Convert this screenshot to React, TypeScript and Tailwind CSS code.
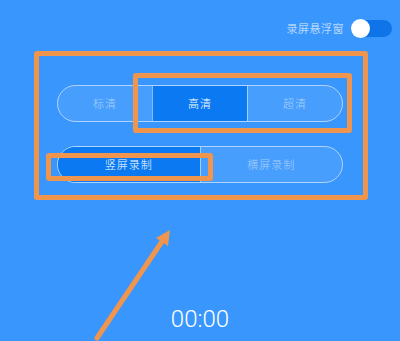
import React from 'react';

const Segmented = ({ items, active }: { items: string[]; active: number }) => (
  <div className="flex h-[37px] rounded-full border border-white/60 overflow-hidden">
    {items.map((label, i) => (
      <div
        key={label}
        className={`flex-1 flex items-center justify-center text-[11px] font-light tracking-[1px] ${
          i > 0 ? 'border-l border-white/50' : ''
        } ${i === active ? 'bg-[#0b7af2] text-white' : 'bg-white/[0.08] text-white/50'}`}
      >
        {label}
      </div>
    ))}
  </div>
);

export default function App() {
  return (
    <div
      className="relative w-[400px] h-[341px] overflow-hidden bg-[#3996fc]"
      style={{ fontFamily: '"Noto Sans CJK SC", "Noto Sans", sans-serif' }}
    >
      <div className="flex items-center justify-end gap-[7px] pt-[20px] pr-[8px]">
        <span className="text-[11px] leading-none font-light text-white/85 tracking-[0.5px]">录屏悬浮窗</span>
        <div className="relative w-[41px] h-[17px] rounded-full bg-[#0e74e8]">
          <div className="absolute left-0 top-[-1px] w-[19px] h-[19px] rounded-full bg-white" />
        </div>
      </div>

      <div className="mx-[57px] mt-[48px] flex flex-col gap-[24px]">
        <Segmented items={['标清', '高清', '超清']} active={1} />
        <Segmented items={['竖屏录制', '横屏录制']} active={0} />
      </div>

      <div
        className="mt-[124px] text-center text-[24px] leading-none font-light text-white"
        style={{ fontFamily: 'Roboto, "Liberation Sans", sans-serif' }}
      >
        00:00
      </div>

      {/* annotation overlays */}
      <div className="absolute left-[34px] top-[51px] w-[334px] h-[149px] border-[5px] border-[#f0954d] rounded-[3px]" />
      <div className="absolute left-[133px] top-[73px] w-[219px] h-[60px] border-[5px] border-[#f0954d] rounded-[3px]" />
      <div className="absolute left-[46px] top-[153px] w-[167px] h-[28px] border-[5px] border-[#f0954d] rounded-[3px]" />
      <svg className="absolute left-0 top-0" width="400" height="341" viewBox="0 0 400 341">
        <line x1="97" y1="338" x2="163" y2="240" stroke="#f0954d" strokeWidth="5" strokeLinecap="round" />
        <polygon points="170,230 168,246 156,238" fill="#f0954d" />
      </svg>
    </div>
  );
}
